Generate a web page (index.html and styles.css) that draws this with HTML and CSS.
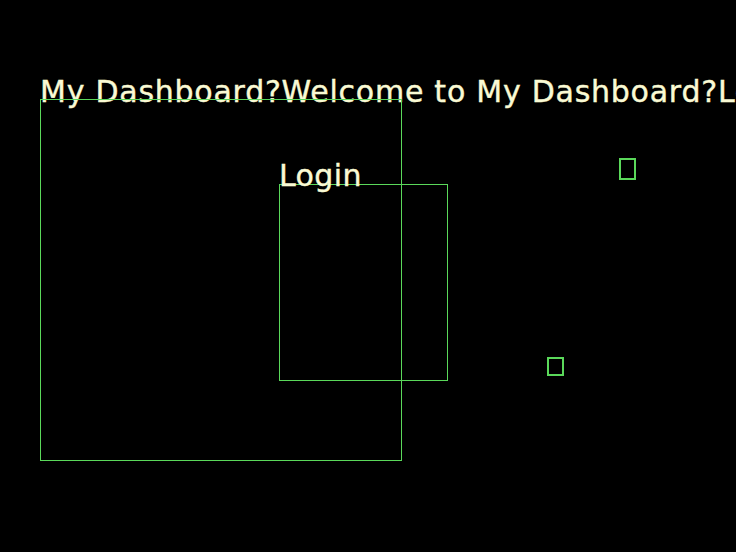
FILE: index.html
```html
<!DOCTYPE html>
<html>
<head>
<meta charset="utf-8">
<link rel="stylesheet" href="styles.css">
</head>
<body>
<div class="stage">
  <h1 class="title">My Dashboard?Welcome to My Dashboard?Login</h1>
  <div class="box box-main"></div>
  <div class="box box-login"></div>
  <div class="login-label">Login</div>
  <div class="box box-icon box-icon-a"></div>
  <div class="box box-icon box-icon-b"></div>
</div>
</body>
</html>
```
FILE: styles.css
```css
html, body {
  margin: 0;
  padding: 0;
  background: #000;
}
.stage {
  position: relative;
  width: 736px;
  height: 552px;
  overflow: hidden;
  font-family: "DejaVu Sans", sans-serif;
  color: #fafad4;
}
.title {
  margin: 0;
  padding: 74px 0 0 40px;
  font-size: 30px;
  font-weight: normal;
  letter-spacing: 0.75px;
  line-height: 36px;
  white-space: nowrap;
  -webkit-text-stroke: 0.4px #fafad4;
}
.box {
  position: absolute;
  border: 1px solid #5ad85a;
  box-sizing: border-box;
}
.box-main {
  left: 40px;
  top: 99px;
  width: 362px;
  height: 362px;
}
.box-login {
  left: 279px;
  top: 184px;
  width: 169px;
  height: 197px;
}
.login-label {
  position: absolute;
  left: 279px;
  top: 158px;
  font-size: 30px;
  letter-spacing: 0.4px;
  line-height: 36px;
  -webkit-text-stroke: 0.4px #fafad4;
}
.box-icon-a {
  left: 619px;
  top: 158px;
  width: 17px;
  height: 22px;
  border-width: 2px;
}
.box-icon-b {
  left: 547px;
  top: 357px;
  width: 17px;
  height: 19px;
  border-width: 2px;
}
```
